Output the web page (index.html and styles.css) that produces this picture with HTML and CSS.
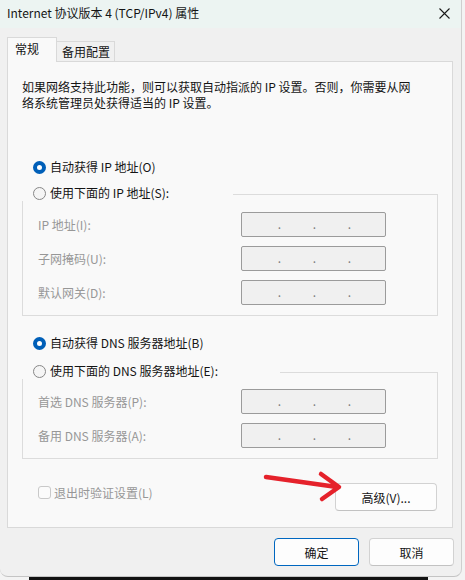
FILE: index.html
```html
<!DOCTYPE html>
<html lang="zh-CN">
<head>
    <meta charset="UTF-8">
    <title>Internet 协议版本 4 (TCP/IPv4) 属性</title>
    <link rel="stylesheet" href="styles.css">
</head>
<body>

    <div class="window">
        <div class="titlebar">
            <span class="title">Internet 协议版本 4 (TCP/IPv4) 属性</span>
            <svg class="close" width="11" height="11" viewBox="0 0 11 11">
                <path d="M0.5 0.5L10.5 10.5M10.5 0.5L0.5 10.5" stroke="#1a1a1a" stroke-width="1.1"/>
            </svg>
        </div>

        <div class="tabs">
            <div class="tab active">常规</div>
            <div class="tab">备用配置</div>
            <div class="tab-fill"></div>
        </div>

        <div class="panel">
            <p class="intro">如果网络支持此功能，则可以获取自动指派的 IP 设置。否则，你需要从网<br>络系统管理员处获得适当的 IP 设置。</p>

            <div class="option option-top"><span class="radio checked"></span>自动获得 IP 地址(O)</div>

            <div class="group">
                <div class="option legend legend-ip"><span class="radio"></span>使用下面的 IP 地址(S):</div>
                <div class="rows">
                    <span class="field-label">IP 地址(I):</span>
                    <div class="ip"><span>.</span><span>.</span><span>.</span></div>
                    <span class="field-label">子网掩码(U):</span>
                    <div class="ip"><span>.</span><span>.</span><span>.</span></div>
                    <span class="field-label">默认网关(D):</span>
                    <div class="ip"><span>.</span><span>.</span><span>.</span></div>
                </div>
            </div>

            <div class="option option-dns"><span class="radio checked"></span>自动获得 DNS 服务器地址(B)</div>

            <div class="group group-dns">
                <div class="option legend legend-dns"><span class="radio"></span>使用下面的 DNS 服务器地址(E):</div>
                <div class="rows rows-dns">
                    <span class="field-label">首选 DNS 服务器(P):</span>
                    <div class="ip"><span>.</span><span>.</span><span>.</span></div>
                    <span class="field-label">备用 DNS 服务器(A):</span>
                    <div class="ip"><span>.</span><span>.</span><span>.</span></div>
                </div>
            </div>

            <div class="footer-row">
                <div class="check-row"><span class="checkbox"></span>退出时验证设置(L)</div>
                <button class="btn btn-advanced">高级(V)...</button>
            </div>
        </div>

        <div class="dialog-buttons">
            <button class="btn btn-default">确定</button>
            <button class="btn">取消</button>
        </div>

        <!-- annotation arrow drawn over the dialog -->
        <svg class="arrow" width="465" height="580" viewBox="0 0 465 580">
            <path d="M266 477L337 487M321 474L339 487L322 499" fill="none" stroke="#e5222b" stroke-width="4.5" stroke-linecap="round" stroke-linejoin="round"/>
        </svg>
    </div>
    <div class="backdrop-bar"></div>

</body>
</html>
```

FILE: styles.css
```css
body {
    margin: 0;
    padding: 0;
    background-color: #f3f3f3;
    font-family: "Noto Sans CJK SC", "Noto Sans", sans-serif;
    font-size: 12px;
    color: #141414;
}

.window {
    position: relative;
    width: 462px;
    height: 577px;
    box-sizing: border-box;
    background-color: #f0f0f0;
    border-right: 1px solid #cfcfcf;
    border-bottom: 1px solid #c4c4c4;
    border-radius: 0 0 8px 8px;
}

.titlebar {
    height: 28px;
    padding: 0 11px 2px 7px;
    box-sizing: border-box;
    display: flex;
    align-items: center;
    justify-content: space-between;
    background-color: #ecf4f2;
}

.title {
    line-height: 16px;
}

.close {
    display: block;
}

/* tabs */
.tabs {
    display: flex;
    align-items: flex-end;
    width: 446px;
    margin: 9px 0 0 7px;
    height: 25px;
}

.tab {
    height: 21px;
    box-sizing: border-box;
    padding: 0 4px 0 5px;
    line-height: 20px;
    border: 1px solid #d9d9d9;
    border-left: none;
    background-color: #f0f0f0;
}

.tab.active {
    height: 25px;
    width: 50px;
    padding: 3px 0 0 7px;
    line-height: 16px;
    border-left: 1px solid #d9d9d9;
    border-bottom: none;
    background-color: #f9f9f9;
}

.tab-fill {
    flex: 1;
    border-bottom: 1px solid #d9d9d9;
}

/* main panel */
.panel {
    width: 446px;
    margin-left: 7px;
    box-sizing: border-box;
    padding: 17px 14px 16px 14px;
    background-color: #f9f9f9;
    border: 1px solid #d9d9d9;
    border-top: none;
}

.intro {
    margin: 0;
    line-height: 16px;
}

.option {
    display: flex;
    align-items: center;
    height: 16px;
    line-height: 16px;
}

.option-top {
    margin-top: 48px;
    padding-left: 11px;
}

.option-dns {
    margin-top: 19px;
    padding-left: 11px;
}

.radio {
    width: 13px;
    height: 13px;
    box-sizing: border-box;
    border: 1px solid #878787;
    border-radius: 50%;
    background-color: #f5f5f5;
    margin-right: 4px;
    flex-shrink: 0;
}

.radio.checked {
    border: 4px solid #005fb8;
    background-color: #fff;
}

.group {
    margin-top: 19px;
    border: 1px solid #dcdcdc;
    padding: 0 0 10px 15px;
}

.group-dns {
    margin-top: 21px;
}

.legend {
    margin: -10px 0 0 -16px;
    padding-left: 11px;
    background-color: #f9f9f9;
    box-sizing: border-box;
}

.legend-ip {
    width: 211px;
}

.legend-dns {
    width: 258px;
}

.rows {
    display: grid;
    grid-template-columns: 203px 145px;
    row-gap: 9px;
    margin-top: 11px;
}

.rows-dns {
    margin-top: 10px;
}

.field-label {
    color: #979797;
    line-height: 25px;
}

.ip {
    height: 25px;
    box-sizing: border-box;
    display: flex;
    padding-left: 20px;
    line-height: 22px;
    border: 1px solid #9b9b9b;
    border-radius: 2px;
    background-color: #f0f0f0;
    color: #7d7d7d;
}

.ip span {
    width: 35px;
    text-align: center;
}

/* checkbox + advanced button */
.footer-row {
    display: flex;
    justify-content: space-between;
    align-items: flex-start;
    margin-top: 24px;
    padding: 0 1px 0 16px;
}

.check-row {
    display: flex;
    align-items: center;
    height: 16px;
    margin-top: 1px;
    color: #979797;
}

.checkbox {
    width: 13px;
    height: 13px;
    box-sizing: border-box;
    border: 1px solid #c9c9c9;
    border-radius: 3px;
    background-color: #fbfbfb;
    margin-right: 3px;
}

.btn {
    width: 85px;
    height: 28px;
    padding: 0;
    font-family: inherit;
    font-size: 12px;
    color: #141414;
    background-color: #fdfdfd;
    border: 1px solid #d2d2d2;
    border-bottom-color: #c2c2c2;
    border-radius: 4px;
}

.btn-advanced {
    width: 102px;
}

.btn-default {
    border: 1px solid #0067c0;
}

.dialog-buttons {
    display: flex;
    justify-content: flex-end;
    gap: 10px;
    margin-top: 10px;
    padding-right: 7px;
}

.arrow {
    position: absolute;
    top: 0;
    left: 0;
    pointer-events: none;
}

.backdrop-bar {
    width: 399px;
    height: 3px;
    margin-left: 29px;
    background-color: #121212;
}
```
